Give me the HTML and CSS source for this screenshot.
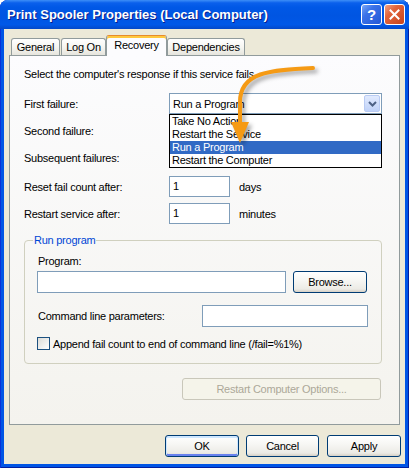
FILE: index.html
```html
<!DOCTYPE html>
<html lang="en">
<head>
    <meta charset="UTF-8">
    <title>Print Spooler Properties</title>
    <link rel="stylesheet" href="styles.css">
</head>
<body>
    <div class="window">
        <div class="titlebar">
            <span class="title">Print Spooler Properties (Local Computer)</span>
            <div class="caption-btns">
                <span class="cap-btn help">?</span>
                <span class="cap-btn close">
                    <svg width="11" height="11" viewBox="0 0 11 11"><path d="M1.5 1.5 L9.5 9.5 M9.5 1.5 L1.5 9.5" stroke="#fff" stroke-width="2" stroke-linecap="square"/></svg>
                </span>
            </div>
        </div>

        <div class="client">
            <div class="tabs">
                <div class="tab t-general">General</div>
                <div class="tab t-logon">Log On</div>
                <div class="tab active t-recovery">Recovery</div>
                <div class="tab t-deps">Dependencies</div>
            </div>

            <div class="panel">
                <p class="intro">Select the computer's response if this service fails.</p>

                <div class="form">
                    <div class="row">
                        <label>First failure:</label>
                        <div class="combo">
                            <span class="combo-text">Run a Program</span>
                            <span class="combo-btn">
                                <svg width="9" height="6" viewBox="0 0 9 6"><path d="M1 1 L4.5 4.5 L8 1" fill="none" stroke="#4d6185" stroke-width="2"/></svg>
                            </span>
                            <ul class="droplist">
                                <li>Take No Action</li>
                                <li>Restart the Service</li>
                                <li class="selected">Run a Program</li>
                                <li>Restart the Computer</li>
                            </ul>
                        </div>
                    </div>
                    <!-- these two combos sit under the open list -->
                    <div class="row">
                        <label>Second failure:</label>
                        <div class="combo"></div>
                    </div>
                    <div class="row">
                        <label>Subsequent failures:</label>
                        <div class="combo"></div>
                    </div>
                    <div class="row gap">
                        <label>Reset fail count after:</label>
                        <div class="edit short">1</div>
                        <span class="unit">days</span>
                    </div>
                    <div class="row">
                        <label>Restart service after:</label>
                        <div class="edit short">1</div>
                        <span class="unit">minutes</span>
                    </div>
                </div>

                <fieldset class="group">
                    <legend>Run program</legend>
                    <div class="prog-label">Program:</div>
                    <div class="prog-row">
                        <div class="edit prog"></div>
                        <button class="btn browse">Browse...</button>
                    </div>
                    <div class="cmd-row">
                        <span class="cmd-label">Command line parameters:</span>
                        <div class="edit cmd"></div>
                    </div>
                    <div class="check-row">
                        <span class="checkbox"></span>
                        <span>Append fail count to end of command line (/fail=%1%)</span>
                    </div>
                </fieldset>

                <div class="restart-row">
                    <button class="btn restart" disabled>Restart Computer Options...</button>
                </div>
            </div>

            <div class="dialog-btns">
                <button class="btn default ok">OK</button>
                <button class="btn cancel">Cancel</button>
                <button class="btn apply">Apply</button>
            </div>
        </div>

        <!-- annotation arrow drawn over the dropdown -->
        <svg class="arrow" width="100" height="90" viewBox="0 0 100 90">
            <path d="M88 8 C45 10 15 12 15 42 L15 64" fill="none" stroke="#f59a14" stroke-width="4" stroke-linecap="round"/>
            <polygon points="6,62 24,62 15,83" fill="#f59a14"/>
        </svg>
    </div>
</body>
</html>
```

FILE: styles.css
```css
* {
    box-sizing: border-box;
}
body {
    margin: 0;
    font-family: "Liberation Sans", Arial, sans-serif;
    font-size: 11px;
    letter-spacing: -0.25px;
    color: #000;
    background: #fff;
}
.window {
    position: relative;
    width: 409px;
    height: 468px;
    display: flex;
    flex-direction: column;
    background: #0055e5;
    border-radius: 8px 8px 0 0;
    box-shadow: inset 1px 0 #0831d9, inset -1px 0 #001ea0, inset 0 -1px #001ea0;
}
.titlebar {
    height: 29px;
    flex: none;
    display: flex;
    align-items: center;
    justify-content: space-between;
    padding: 0 4px 0 7px;
    border-radius: 8px 8px 0 0;
    background: linear-gradient(#3d8ff7 0, #0a60ec 10%, #0058e6 25%, #0055e2 55%, #0058e8 85%, #0448c8 100%);
}
.title {
    color: #fff;
    font-weight: bold;
    font-size: 13px;
    letter-spacing: 0;
    text-shadow: 1px 1px #0a1e8c;
}
.caption-btns {
    display: flex;
    gap: 2px;
}
.cap-btn {
    width: 21px;
    height: 21px;
    border: 1px solid #fff;
    border-radius: 3px;
    display: flex;
    align-items: center;
    justify-content: center;
    color: #fff;
}
.help {
    font-weight: bold;
    font-size: 15px;
    letter-spacing: 0;
    background: linear-gradient(135deg, #7aa8f8 0, #3a72e8 35%, #2257d6 100%);
}
.close {
    background: linear-gradient(135deg, #f3a283 0, #e2643b 35%, #c8431a 100%);
}
.client {
    flex: 1;
    margin: 0 4px 4px;
    background: #ece9d8;
    display: flex;
    flex-direction: column;
}
.tabs {
    display: flex;
    align-items: flex-end;
    margin: 6px 0 -1px 7px;
    position: relative;
    z-index: 1;
    height: 21px;
}
.tab {
    height: 17px;
    margin-bottom: 1px;
    border: 1px solid #919b9c;
    border-bottom: none;
    border-radius: 3px 3px 0 0;
    background: linear-gradient(#fff 0, #f6f6f2 50%, #e6e5dd 100%);
    text-align: center;
    line-height: 16px;
}
.tab.active {
    height: 21px;
    margin-bottom: 0;
    border-top-color: #e68b2c;
    background: #fcfcfe;
    box-shadow: inset 0 2px #ffc83c;
    padding-top: 3px;
    line-height: 13px;
}
.t-general { width: 49px; margin-right: 1px; }
.t-logon { width: 45px; }
.t-recovery { width: 61px; }
.t-deps { width: 78px; }
.panel {
    position: relative;
    height: 370px;
    margin: 0 5px 0 5px;
    border: 1px solid #919b9c;
    background: linear-gradient(#fcfcfe, #f4f3ee);
    padding: 12px 17px 0 14px;
}
.intro {
    margin: 0;
    line-height: 13px;
}
.form {
    margin-top: 9px;
}
.row {
    display: flex;
    align-items: center;
    height: 27px;
}
.row.gap {
    margin-top: 2px;
}
.row label {
    width: 145px;
    flex: none;
}
.combo {
    position: relative;
    flex: 1;
    height: 21px;
    border: 1px solid #7f9db9;
    background: #fff;
    display: flex;
    align-items: center;
    padding-left: 3px;
}
.combo-text {
    flex: 1;
}
.combo-btn {
    width: 16px;
    height: 17px;
    margin-right: 1px;
    border-radius: 2px;
    background: linear-gradient(#e1eafe, #c0d2f8);
    border: 1px solid #b9cbf3;
    display: flex;
    align-items: center;
    justify-content: center;
}
.droplist {
    position: absolute;
    top: 20px;
    left: -1px;
    right: -1px;
    z-index: 2;
    margin: 0;
    padding: 0;
    list-style: none;
    border: 1px solid #000;
    background: #fff;
}
.droplist li {
    height: 13px;
    line-height: 13px;
    padding-left: 2px;
}
.droplist li.selected {
    background: #316ac5;
    color: #fff;
}
.edit {
    height: 21px;
    border: 1px solid #7f9db9;
    background: #fff;
    padding-left: 3px;
    line-height: 19px;
}
.short {
    width: 61px;
}
.unit {
    margin-left: 9px;
}
.group {
    margin: 7px 0 0;
    min-width: 0;
    border: 1px solid #d0d0bf;
    border-radius: 4px;
    padding: 0 12px 13px 12px;
}
.group legend {
    color: #0046d5;
    padding: 0 1px;
    margin-left: -4px;
    line-height: 13px;
}
.prog-label {
    margin-top: 8px;
    padding-left: 1px;
    line-height: 13px;
}
.prog-row {
    display: flex;
    gap: 7px;
    margin-top: 3px;
}
.edit.prog {
    width: 249px;
    height: 22px;
}
.btn {
    font: inherit;
    letter-spacing: inherit;
    color: #000;
    height: 22px;
    padding: 0;
    border: 1px solid #003c74;
    border-radius: 3px;
    background: linear-gradient(#fff 0, #f7f7f4 40%, #ecebe6 85%, #d6d0c5 100%);
}
.browse {
    width: 74px;
}
.cmd-row {
    display: flex;
    align-items: center;
    margin-top: 12px;
}
.cmd-label {
    width: 165px;
    padding-left: 1px;
}
.edit.cmd {
    width: 166px;
    height: 22px;
}
.check-row {
    display: flex;
    align-items: center;
    gap: 3px;
    margin-top: 10px;
}
.checkbox {
    width: 13px;
    height: 13px;
    border: 1px solid #1c5180;
    background: linear-gradient(135deg, #dcdcd7, #fff);
}
.restart-row {
    display: flex;
    justify-content: flex-end;
    margin-top: 14px;
}
.btn.restart {
    width: 199px;
    margin-right: 1px;
}
.btn:disabled {
    color: #aca899;
    border-color: #c9c7ba;
    background: #f5f4ea;
}
.dialog-btns {
    display: flex;
    justify-content: flex-end;
    margin: 10px 4px 0 0;
}
.ok {
    width: 74px;
    margin-right: 7px;
}
.cancel {
    width: 73px;
    margin-right: 8px;
}
.apply {
    width: 74px;
}
.btn.default {
    box-shadow: inset 0 1px 0 1px #cee7ff, inset 0 -1px 0 1px #6982ee;
}
.arrow {
    position: absolute;
    left: 225px;
    top: 60px;
    z-index: 5;
    filter: drop-shadow(3px 3px 2px rgba(0, 0, 0, 0.35));
}
```
